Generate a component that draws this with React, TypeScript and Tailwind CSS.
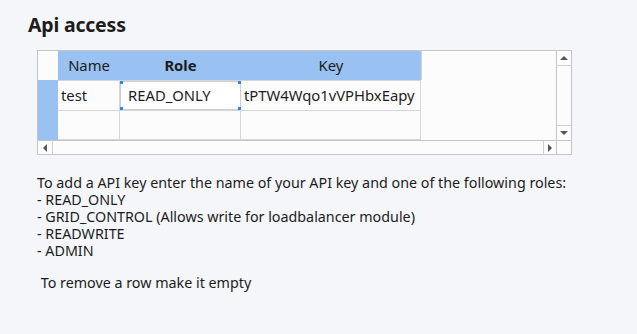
import React from "react";

const font = { fontFamily: '"Noto Sans", "Open Sans", sans-serif' };

const Corner = ({ pos }: { pos: string }) => (
  <span className={`absolute h-[3px] w-[3px] bg-[#3584e4] ${pos}`} />
);

const App = () => {
  return (
    <div className="h-[334px] w-[637px] bg-[#f5f6f9] text-[#1c1c1c] overflow-hidden" style={font}>
      <div className="pl-[28px] pt-[12px]">
        <h1 className="text-[19.5px] font-bold leading-[26px] tracking-[-0.2px]">Api access</h1>
      </div>

      {/* table frame */}
      <div className="ml-[37px] mt-[12px] flex h-[105px] w-[535px] flex-col border border-[#c6c6c6] bg-[#fcfcfc]">
        <div className="flex h-[89px]">
          <div className="flex w-[518px] flex-col">
            {/* header */}
            <div className="flex h-[29px] text-[14.8px]">
              <div className="w-[20px] bg-[#fcfcfc]" />
              <div className="flex w-[62px] items-center justify-center bg-[#99c1f1]">Name</div>
              <div className="flex w-[121px] items-center justify-center bg-[#99c1f1] font-bold">Role</div>
              <div className="flex w-[180px] items-center justify-center bg-[#99c1f1]">Key</div>
              <div className="flex-1 border-l border-[#d6d6d6]" />
            </div>
            {/* row 1 */}
            <div className="flex h-[30px] text-[14.8px]">
              <div className="w-[20px] bg-[#99c1f1]" />
              <div className="flex w-[62px] items-center border-r border-t border-[#d6d6d6] pl-[3px]">test</div>
              <div className="relative flex w-[121px] items-center border-t border-[#d6d6d6]">
                <div className="relative flex h-full w-full items-center rounded-[3px] border border-[#cfcfcf] bg-white pl-[7px]">
                  READ_ONLY
                  <Corner pos="-left-px -top-px" />
                  <Corner pos="-right-px -top-px" />
                  <Corner pos="-left-px -bottom-px" />
                  <Corner pos="-right-px -bottom-px" />
                </div>
              </div>
              <div className="flex w-[180px] items-center overflow-hidden whitespace-nowrap border-r border-t border-[#d6d6d6] pl-[3px]">
                tPTW4Wqo1vVPHbxEapy
              </div>
              <div className="flex-1" />
            </div>
            {/* row 2 */}
            <div className="flex h-[30px]">
              <div className="w-[20px] bg-[#99c1f1]" />
              <div className="w-[62px] border-r border-t border-b border-[#d6d6d6]" />
              <div className="w-[121px] border-r border-t border-b border-[#d6d6d6]" />
              <div className="w-[180px] border-r border-t border-b border-[#d6d6d6]" />
              <div className="flex-1" />
            </div>
          </div>
          {/* vertical scrollbar */}
          <div className="flex w-[15px] flex-col border-l border-[#c6c6c6] bg-[#fcfcfc]">
            <div className="flex h-[15px] items-center justify-center border-b border-[#d0d0d0]">
              <span className="h-0 w-0 border-x-[4px] border-b-[4px] border-x-transparent border-b-[#555]" />
            </div>
            <div className="flex-1" />
            <div className="flex h-[15px] items-center justify-center border-t border-[#d0d0d0]">
              <span className="h-0 w-0 border-x-[4px] border-t-[4px] border-x-transparent border-t-[#555]" />
            </div>
          </div>
        </div>
        {/* horizontal scrollbar */}
        <div className="flex h-[14px] border-t border-[#c6c6c6]">
          <div className="flex w-[15px] items-center justify-center border-r border-[#d0d0d0]">
            <span className="h-0 w-0 border-y-[4px] border-r-[4px] border-y-transparent border-r-[#555]" />
          </div>
          <div className="flex-1" />
          <div className="flex w-[13px] items-center justify-center border-l border-[#d0d0d0]">
            <span className="h-0 w-0 border-y-[4px] border-l-[4px] border-y-transparent border-l-[#555]" />
          </div>
          <div className="w-[15px] border-l border-[#c6c6c6]" />
        </div>
      </div>

      <div className="ml-[37px] mt-[19px] text-[14.3px] leading-[17px] whitespace-pre">
        <div>To add a API key enter the name of your API key and one of the following roles:</div>
        <div>- READ_ONLY</div>
        <div>- GRID_CONTROL (Allows write for loadbalancer module)</div>
        <div>- READWRITE</div>
        <div>- ADMIN</div>
        <div>&nbsp;</div>
        <div className="mt-[-2px]"> To remove a row make it empty</div>
      </div>
    </div>
  );
};

export default App;
